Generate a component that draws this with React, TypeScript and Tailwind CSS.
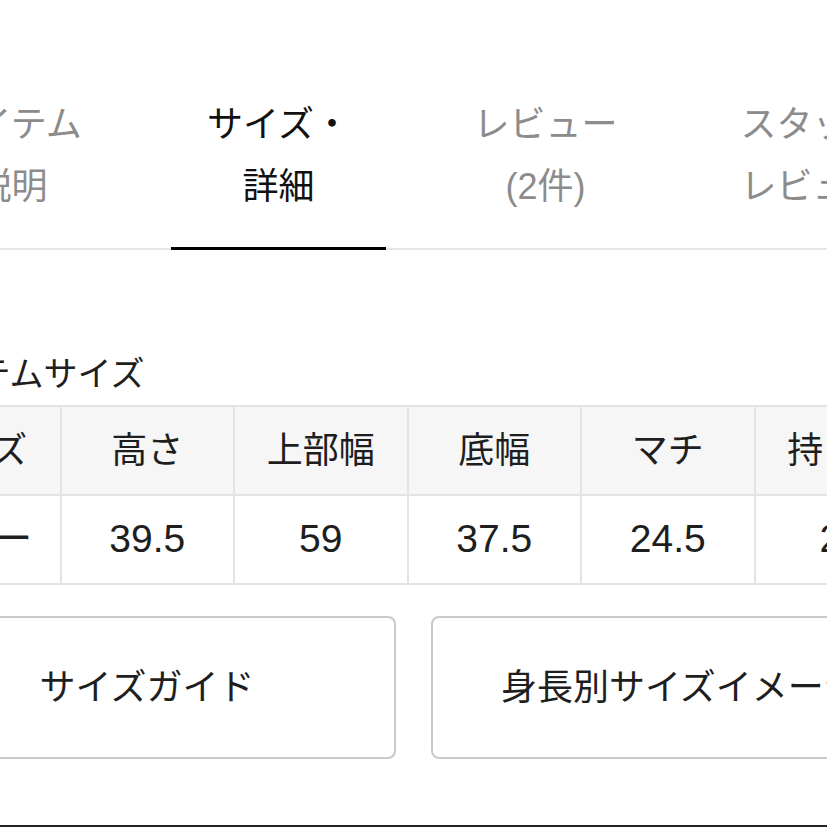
import React from 'react';

const tabs = [
  { top: 'アイテム', bottom: '説明', active: false },
  { top: 'サイズ・', bottom: '詳細', active: true },
  { top: 'レビュー', bottom: '(2件)', active: false },
  { top: 'スタッフ', bottom: 'レビュー', active: false },
];

const headers = ['サイズ', '高さ', '上部幅', '底幅', 'マチ', '持ち手'];
const values = ['フリー', '39.5', '59', '37.5', '24.5', '28'];

export default function App() {
  return (
    <div
      className="h-[827px] w-[827px] overflow-hidden bg-white text-[#1e1e1e]"
      style={{ fontFamily: '"Liberation Sans", "Noto Sans CJK JP", sans-serif' }}
    >
      <div className="pt-[94px] border-b-2 border-[#e6e6e6]">
        <div className="flex gap-[52px] -ml-[96px]">
          {tabs.map((t) => (
            <div
              key={t.top}
              className={
                t.active
                  ? 'w-[215px] shrink-0 text-center text-[36px] leading-[62px] pb-[29px] border-b-[3px] border-black -mb-[2px] text-[#111] whitespace-nowrap'
                  : 'w-[215px] shrink-0 text-center text-[36px] leading-[62px] pb-[29px] border-b-[3px] border-transparent -mb-[2px] text-[#8c8c8c] whitespace-nowrap'
              }
            >
              <div>{t.top}</div>
              <div>{t.bottom}</div>
            </div>
          ))}
        </div>
      </div>

      <h2 className="mt-[104px] -ml-[89px] text-[34px] leading-[40px] whitespace-nowrap">アイテムサイズ</h2>

      <div className="mt-[11px] -ml-[114px] w-[1041px] grid grid-cols-[repeat(6,173.5px)] border-t-2 border-l-2 border-[#e3e3e3]">
        {headers.map((h) => (
          <div
            key={h}
            className="h-[89px] flex items-center justify-center bg-[#f6f6f6] border-r-2 border-b-2 border-[#e3e3e3] text-[36px] whitespace-nowrap"
          >
            {h}
          </div>
        ))}
        {values.map((v, i) => (
          <div
            key={i}
            className="h-[89px] flex items-center justify-center bg-white border-r-2 border-b-2 border-[#e3e3e3] text-[39px] whitespace-nowrap"
          >
            {v}
          </div>
        ))}
      </div>

      <div className="mt-[31px] -ml-[102px] flex gap-[35px]">
        <button className="w-[498px] h-[143px] shrink-0 flex items-center justify-center rounded-[8px] border-2 border-[#c9c9c9] bg-white text-[36px] whitespace-nowrap">
          サイズガイド
        </button>
        <button className="w-[498px] h-[143px] shrink-0 flex items-center justify-center rounded-[8px] border-2 border-[#c9c9c9] bg-white text-[36px] whitespace-nowrap">
          身長別サイズイメージ
        </button>
      </div>

      <div className="mt-[66px] h-[3px] bg-[#222]" />
    </div>
  );
}
